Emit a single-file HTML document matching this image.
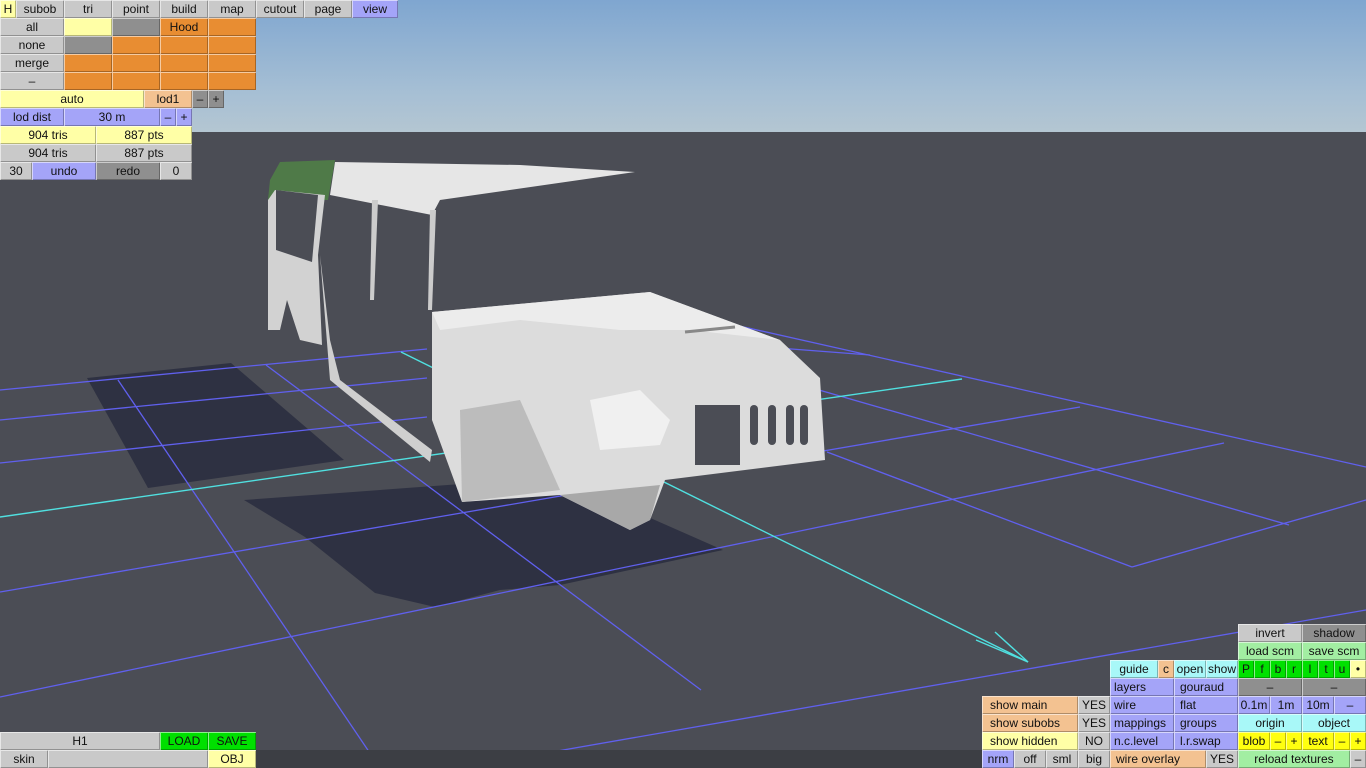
<!DOCTYPE html>
<html><head><meta charset="utf-8"><style>
*{margin:0;padding:0;box-sizing:border-box}
body{width:1366px;height:768px;overflow:hidden;position:relative;background:#4b4d55;font-family:"Liberation Sans",sans-serif;font-size:12px}
.b{position:absolute;height:18px;line-height:18px;text-align:center;color:#111;box-shadow:inset 1px 1px 0 rgba(255,255,255,.55),inset -1px -1px 0 rgba(0,0,0,.28);white-space:nowrap;overflow:hidden}
.l{text-align:left;padding-left:8px}
.g{background:#c9c9c9}.dg{background:#8f8f8f}.y{background:#ffffa6}.o{background:#e88d32}.lo{background:#f3c291}
.bl{background:#a4a4f8}.c{background:#a8f8f8}.gr{background:#00e000}.lg{background:#a2eea2}.yy{background:#ffff10}
</style></head><body>
<div style="position:absolute;left:0;top:0;width:1366px;height:132px;background:linear-gradient(#7fa6d0,#a6bfd4 70%,#b4c6d2)"></div>
<svg width="1366" height="768" style="position:absolute;left:0;top:0">
<polygon points="87,378 231,363 344,460 148,488" fill="#2e3142"/>
<polygon points="244,500 557,477 723,550 560,585 500,590 435,607 375,593 305,537" fill="#2e3142"/>
<g stroke="#6060ee" stroke-width="1.3">
<line x1="0" y1="390" x2="427" y2="349"/><line x1="0" y1="420" x2="427" y2="378"/><line x1="0" y1="463" x2="427" y2="417"/>
<line x1="0" y1="592" x2="1080" y2="407"/><line x1="0" y1="697" x2="1224" y2="443"/><line x1="460" y1="768" x2="1366" y2="610"/>
<line x1="1132" y1="567" x2="1366" y2="500"/>
<line x1="118" y1="380" x2="380" y2="768"/><line x1="266" y1="365" x2="701" y2="690"/>
<line x1="735" y1="325" x2="1366" y2="467"/><line x1="819" y1="390" x2="1289" y2="525"/><line x1="827" y1="452" x2="1132" y2="567"/>
<line x1="700" y1="342" x2="870" y2="355"/>
</g>
<g stroke="#50e0e0" stroke-width="1.4"><line x1="0" y1="517" x2="962" y2="379"/><line x1="401" y1="352" x2="1028" y2="662"/>
<line x1="1028" y1="662" x2="976" y2="640"/><line x1="1028" y1="662" x2="995" y2="632"/></g>
<!-- car -->
<polygon points="270,180 280,162 335,160 328,200 268,200" fill="#4f7a48"/>
<polygon points="268,200 275,190 325,195 318,255 322,345 300,340 287,300 280,330 268,330" fill="#d2d2d2"/>
<polygon points="276,190 318,195 312,262 276,250" fill="#4b4d55"/>
<polygon points="335,162 520,165 635,172 440,200 432,215 330,195" fill="#e6e6e6"/>
<polygon points="320,255 330,380 430,462 432,450 340,380 330,340" fill="#cfcfcf"/>
<polygon points="372,200 378,200 374,300 370,300" fill="#cccccc"/>
<polygon points="430,210 436,210 432,310 428,310" fill="#cccccc"/>
<polygon points="432,312 650,292 780,340 820,378 825,460 665,480 650,520 630,530 560,495 462,502 432,420" fill="#dcdcdc"/>
<polygon points="432,312 650,292 780,340 690,330 620,330 520,320 440,330" fill="#ececec"/>
<polygon points="460,410 520,400 560,490 462,502" fill="#bcbcbc"/>
<polygon points="560,495 660,485 650,520 630,530" fill="#a8a8a8"/>
<polygon points="590,400 640,390 670,420 660,445 600,450" fill="#f0f0f0"/>
<rect x="695" y="405" width="45" height="60" fill="#4b4d55"/>
<rect x="750" y="405" width="8" height="40" rx="4" fill="#4b4d55"/>
<rect x="768" y="405" width="8" height="40" rx="4" fill="#4b4d55"/>
<rect x="786" y="405" width="8" height="40" rx="4" fill="#4b4d55"/>
<rect x="800" y="405" width="8" height="40" rx="4" fill="#4b4d55"/>
<line x1="685" y1="332" x2="735" y2="327" stroke="#888" stroke-width="3"/>
</svg>
<!-- top left -->
<div class="b y" style="left:0;top:0;width:16px">H</div>
<div class="b g" style="left:16px;top:0;width:48px">subob</div>
<div class="b g" style="left:64px;top:0;width:48px">tri</div>
<div class="b g" style="left:112px;top:0;width:48px">point</div>
<div class="b g" style="left:160px;top:0;width:48px">build</div>
<div class="b g" style="left:208px;top:0;width:48px">map</div>
<div class="b g" style="left:256px;top:0;width:48px">cutout</div>
<div class="b g" style="left:304px;top:0;width:48px">page</div>
<div class="b bl" style="left:352px;top:0;width:46px">view</div>
<div class="b g" style="left:0;top:18px;width:64px">all</div>
<div class="b y" style="left:64px;top:18px;width:48px"></div>
<div class="b dg" style="left:112px;top:18px;width:48px"></div>
<div class="b o" style="left:160px;top:18px;width:48px">Hood</div>
<div class="b o" style="left:208px;top:18px;width:48px"></div>
<div class="b g" style="left:0;top:36px;width:64px">none</div>
<div class="b dg" style="left:64px;top:36px;width:48px"></div>
<div class="b o" style="left:112px;top:36px;width:48px"></div>
<div class="b o" style="left:160px;top:36px;width:48px"></div>
<div class="b o" style="left:208px;top:36px;width:48px"></div>
<div class="b g" style="left:0;top:54px;width:64px">merge</div>
<div class="b o" style="left:64px;top:54px;width:48px"></div>
<div class="b o" style="left:112px;top:54px;width:48px"></div>
<div class="b o" style="left:160px;top:54px;width:48px"></div>
<div class="b o" style="left:208px;top:54px;width:48px"></div>
<div class="b g" style="left:0;top:72px;width:64px">–</div>
<div class="b o" style="left:64px;top:72px;width:48px"></div>
<div class="b o" style="left:112px;top:72px;width:48px"></div>
<div class="b o" style="left:160px;top:72px;width:48px"></div>
<div class="b o" style="left:208px;top:72px;width:48px"></div>
<div class="b y" style="left:0;top:90px;width:144px">auto</div>
<div class="b lo" style="left:144px;top:90px;width:48px">lod1</div>
<div class="b dg" style="left:192px;top:90px;width:16px">–</div>
<div class="b dg" style="left:208px;top:90px;width:16px">+</div>
<div class="b bl" style="left:0;top:108px;width:64px">lod dist</div>
<div class="b bl" style="left:64px;top:108px;width:96px">30 m</div>
<div class="b bl" style="left:160px;top:108px;width:16px">–</div>
<div class="b bl" style="left:176px;top:108px;width:16px">+</div>
<div class="b y" style="left:0;top:126px;width:96px">904 tris</div>
<div class="b y" style="left:96px;top:126px;width:96px">887 pts</div>
<div class="b g" style="left:0;top:144px;width:96px">904 tris</div>
<div class="b g" style="left:96px;top:144px;width:96px">887 pts</div>
<div class="b g" style="left:0;top:162px;width:32px">30</div>
<div class="b bl" style="left:32px;top:162px;width:64px">undo</div>
<div class="b dg" style="left:96px;top:162px;width:64px">redo</div>
<div class="b g" style="left:160px;top:162px;width:32px">0</div>
<!-- bottom strip -->
<div style="position:absolute;left:256px;top:750px;width:726px;height:18px;background:#3c3e44"></div>
<div class="b g" style="left:0;top:732px;width:160px">H1</div>
<div class="b gr" style="left:160px;top:732px;width:48px">LOAD</div>
<div class="b gr" style="left:208px;top:732px;width:48px">SAVE</div>
<div class="b g" style="left:0;top:750px;width:48px">skin</div>
<div class="b g" style="left:48px;top:750px;width:160px"></div>
<div class="b y" style="left:208px;top:750px;width:48px">OBJ</div>
<!-- bottom right -->
<div class="b g" style="left:1238px;top:624px;width:64px">invert</div>
<div class="b dg" style="left:1302px;top:624px;width:64px">shadow</div>
<div class="b lg" style="left:1238px;top:642px;width:64px">load scm</div>
<div class="b lg" style="left:1302px;top:642px;width:64px">save scm</div>
<div class="b c" style="left:1110px;top:660px;width:48px">guide</div>
<div class="b lo" style="left:1158px;top:660px;width:16px">c</div>
<div class="b c" style="left:1174px;top:660px;width:32px">open</div>
<div class="b c" style="left:1206px;top:660px;width:32px">show</div>
<div class="b gr" style="left:1238px;top:660px;width:16px">P</div>
<div class="b gr" style="left:1254px;top:660px;width:16px">f</div>
<div class="b gr" style="left:1270px;top:660px;width:16px">b</div>
<div class="b gr" style="left:1286px;top:660px;width:16px">r</div>
<div class="b gr" style="left:1302px;top:660px;width:16px">l</div>
<div class="b gr" style="left:1318px;top:660px;width:16px">t</div>
<div class="b gr" style="left:1334px;top:660px;width:16px">u</div>
<div class="b y" style="left:1350px;top:660px;width:16px">•</div>
<div class="b bl l" style="left:1110px;top:678px;width:64px;padding-left:4px">layers</div>
<div class="b bl l" style="left:1174px;top:678px;width:64px;padding-left:6px">gouraud</div>
<div class="b dg" style="left:1238px;top:678px;width:64px">–</div>
<div class="b dg" style="left:1302px;top:678px;width:64px">–</div>
<div class="b lo l" style="left:982px;top:696px;width:96px">show main</div>
<div class="b g" style="left:1078px;top:696px;width:32px">YES</div>
<div class="b bl l" style="left:1110px;top:696px;width:64px;padding-left:4px">wire</div>
<div class="b bl l" style="left:1174px;top:696px;width:64px;padding-left:6px">flat</div>
<div class="b bl" style="left:1238px;top:696px;width:32px">0.1m</div>
<div class="b bl" style="left:1270px;top:696px;width:32px">1m</div>
<div class="b bl" style="left:1302px;top:696px;width:32px">10m</div>
<div class="b bl" style="left:1334px;top:696px;width:32px">–</div>
<div class="b lo l" style="left:982px;top:714px;width:96px">show subobs</div>
<div class="b g" style="left:1078px;top:714px;width:32px">YES</div>
<div class="b bl l" style="left:1110px;top:714px;width:64px;padding-left:4px">mappings</div>
<div class="b bl l" style="left:1174px;top:714px;width:64px;padding-left:6px">groups</div>
<div class="b c" style="left:1238px;top:714px;width:64px">origin</div>
<div class="b c" style="left:1302px;top:714px;width:64px">object</div>
<div class="b y l" style="left:982px;top:732px;width:96px">show hidden</div>
<div class="b g" style="left:1078px;top:732px;width:32px">NO</div>
<div class="b bl l" style="left:1110px;top:732px;width:64px;padding-left:4px">n.c.level</div>
<div class="b bl l" style="left:1174px;top:732px;width:64px;padding-left:6px">l.r.swap</div>
<div class="b yy" style="left:1238px;top:732px;width:32px">blob</div>
<div class="b yy" style="left:1270px;top:732px;width:16px">–</div>
<div class="b yy" style="left:1286px;top:732px;width:16px">+</div>
<div class="b yy" style="left:1302px;top:732px;width:32px">text</div>
<div class="b yy" style="left:1334px;top:732px;width:16px">–</div>
<div class="b yy" style="left:1350px;top:732px;width:16px">+</div>
<div class="b bl" style="left:982px;top:750px;width:32px">nrm</div>
<div class="b g" style="left:1014px;top:750px;width:32px">off</div>
<div class="b g" style="left:1046px;top:750px;width:32px">sml</div>
<div class="b g" style="left:1078px;top:750px;width:32px">big</div>
<div class="b lo l" style="left:1110px;top:750px;width:96px;padding-left:6px">wire overlay</div>
<div class="b g" style="left:1206px;top:750px;width:32px">YES</div>
<div class="b lg" style="left:1238px;top:750px;width:112px">reload textures</div>
<div class="b g" style="left:1350px;top:750px;width:16px">–</div>
</body></html>
